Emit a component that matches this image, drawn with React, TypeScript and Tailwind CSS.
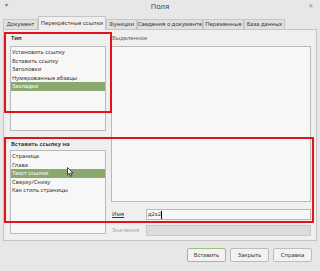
import React from "react";

const TABS = [
  { label: "Документ", w: "w-[35px]" },
  { label: "Перекрёстные ссылки", w: "w-[68px]", active: true },
  { label: "Функции", w: "w-[31px]" },
  { label: "Сведения о документе", w: "w-[66px]" },
  { label: "Переменные", w: "w-[41px]" },
  { label: "База данных", w: "w-[41px]" },
];

const TYPES = ["Установить ссылку", "Вставить ссылку", "Заголовки", "Нумерованные абзацы", "Закладки"];
const INSERT_AS = ["Страница", "Глава", "Текст ссылки", "Сверху/Снизу", "Как стиль страницы"];

function List({ items, selected, h }: { items: string[]; selected: number; h: string }) {
  return (
    <div className={`${h} border border-[#b9b9b9] bg-[#f7f7f7] pt-[1px]`}>
      {items.map((it, i) => (
        <div
          key={it}
          className={
            "h-[8.5px] leading-[8.5px] pl-[1px] whitespace-nowrap " +
            (i === selected ? "bg-[#8ba86e] text-white" : "text-[#3a3a3a]")
          }
        >
          {it}
        </div>
      ))}
    </div>
  );
}

function Button({ label, focused }: { label: string; focused?: boolean }) {
  return (
    <div
      className={
        "w-[39px] h-[14px] flex items-center justify-center rounded-[2px] border bg-[#f2f2f2] text-[#3a3a3a] " +
        (focused ? "border-[#9cbf7c]" : "border-[#bdbdbd]")
      }
    >
      {label}
    </div>
  );
}

export default function App() {
  return (
    <div
      className="relative w-[320px] h-[271px] bg-[#e7e7e7] text-[5.8px] text-[#3a3a3a] flex flex-col overflow-hidden"
      style={{ fontFamily: '"Noto Sans", "DejaVu Sans", sans-serif' }}
    >
      {/* title bar */}
      <div className="relative h-[14px] flex items-center justify-center">
        <span className="absolute left-[5px] top-[1px] text-[6px] text-[#777]">▾</span>
        <span className="text-[7.5px] text-[#444]">Поля</span>
        <span className="absolute right-[7px] top-[2px] text-[8px] leading-[8px] text-[#999]">×</span>
      </div>

      {/* tabs */}
      <div className="h-[15px] pl-[3px] flex items-end">
        {TABS.map((t) => (
          <div
            key={t.label}
            className={
              `${t.w} flex items-center justify-center whitespace-nowrap overflow-hidden border border-b-0 rounded-t-[1px] ` +
              (t.active
                ? "h-[14px] bg-[#efefef] border-[#c4c4c4] -mb-px z-10"
                : "h-[10px] bg-[#e0e0e0] border-[#c6c6c6]")
            }
          >
            {t.label}
          </div>
        ))}
      </div>

      {/* panel */}
      <div className="mx-[3px] h-[212px] border border-[#c4c4c4] bg-[#efefef] pl-[6px] pr-[5px] flex gap-[5px]">
        <div className="w-[96px] flex flex-col">
          <div className="h-[16px] flex items-center pl-[1px] font-bold">Тип</div>
          <List items={TYPES} selected={4} h="h-[85px]" />
          <div className="h-[19px] flex items-end pb-[1px] pl-[1px] font-bold whitespace-nowrap">
            Вставить ссылку на
          </div>
          <div className="relative">
            <List items={INSERT_AS} selected={2} h="h-[84px]" />
            <svg className="absolute left-[57px] top-[17px]" width="7" height="10" viewBox="0 0 7 10">
              <path d="M0.5 0.5 L0.5 8 L2.3 6.3 L3.6 9.3 L4.8 8.8 L3.6 5.9 L6 5.9 Z" fill="#fff" stroke="#222" strokeWidth="0.8" />
            </svg>
          </div>
        </div>

        <div className="flex-1 flex flex-col">
          <div className="h-[16px] flex items-center pl-[1px] text-[#666]">Выделенное</div>
          <div className="h-[156px] border border-[#b9b9b9] bg-[#f7f7f7]" />
          <div className="mt-[7px] h-[11px] flex items-center">
            <span className="w-[35px] pl-[1px] underline decoration-[0.5px]">Имя</span>
            <div className="flex-1 h-full border border-[#b9b9b9] bg-[#f7f7f7] flex items-center pl-[1px]">
              <span>д2з2</span>
              <span className="w-px h-[8px] bg-black" />
            </div>
          </div>
          <div className="mt-[5px] h-[11px] flex items-center">
            <span className="w-[35px] pl-[1px] text-[#a8a8a8]">Значение</span>
            <div className="flex-1 h-full border border-[#c8c8c8] bg-[#dcdcdc]" />
          </div>
        </div>
      </div>

      {/* buttons */}
      <div className="mt-[7px] pr-[8px] flex justify-end gap-[4px]">
        <Button label="Вставить" focused />
        <Button label="Закрыть" />
        <Button label="Справка" />
      </div>

      {/* red annotation frames */}
      <div className="absolute left-[4px] top-[32px] w-[108px] h-[81px] border-2 border-[#e0151b] pointer-events-none" />
      <div className="absolute left-[4px] top-[137px] w-[310px] h-[86px] border-2 border-[#e0151b] pointer-events-none" />
    </div>
  );
}
